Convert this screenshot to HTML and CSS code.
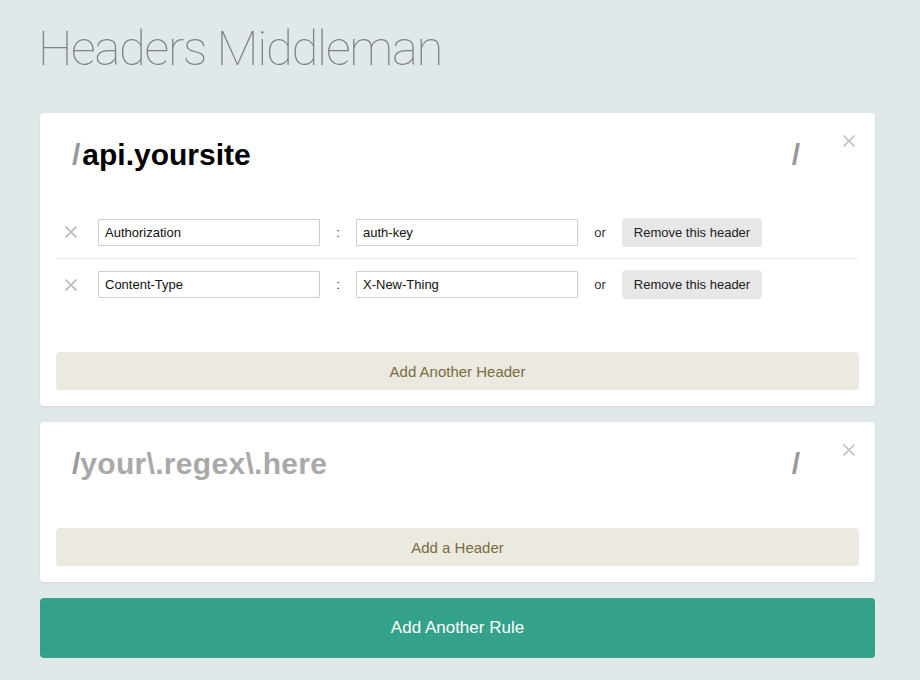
FILE: index.html
```html
<!DOCTYPE html>
<html>
<head>
<meta charset="utf-8">
<link rel="stylesheet" href="styles.css">
</head>
<body>
<main class="page">
  <h1 class="title">Headers Middleman</h1>

  <section class="card">
    <button class="card-close" aria-label="Remove rule">
      <svg width="12" height="12" viewBox="0 0 12 12"><path d="M0.5 0.5L11.5 11.5M11.5 0.5L0.5 11.5" stroke="#c4c4c4" stroke-width="1.6"/></svg>
    </button>
    <div class="rule-head">
      <span class="slash">/</span><span class="pattern">api.yoursite</span>
      <span class="slash slash-end">/</span>
    </div>
    <div class="rows">
      <div class="row">
        <span class="row-x"><svg width="12" height="12" viewBox="0 0 12 12"><path d="M0.5 0.5L11.5 11.5M11.5 0.5L0.5 11.5" stroke="#bdbdbd" stroke-width="1.8"/></svg></span>
        <input class="field" value="Authorization">
        <span class="colon">:</span>
        <input class="field" value="auth-key">
        <span class="or">or</span>
        <button class="remove">Remove this header</button>
      </div>
      <div class="row">
        <span class="row-x"><svg width="12" height="12" viewBox="0 0 12 12"><path d="M0.5 0.5L11.5 11.5M11.5 0.5L0.5 11.5" stroke="#bdbdbd" stroke-width="1.8"/></svg></span>
        <input class="field" value="Content-Type">
        <span class="colon">:</span>
        <input class="field" value="X-New-Thing">
        <span class="or">or</span>
        <button class="remove">Remove this header</button>
      </div>
    </div>
    <button class="add-header">Add Another Header</button>
  </section>

  <section class="card">
    <button class="card-close" aria-label="Remove rule">
      <svg width="12" height="12" viewBox="0 0 12 12"><path d="M0.5 0.5L11.5 11.5M11.5 0.5L0.5 11.5" stroke="#c4c4c4" stroke-width="1.6"/></svg>
    </button>
    <div class="rule-head">
      <span class="slash">/</span><span class="pattern placeholder">your\.regex\.here</span>
      <span class="slash slash-end">/</span>
    </div>
    <div class="rows empty"></div>
    <button class="add-header">Add a Header</button>
  </section>

  <button class="add-rule">Add Another Rule</button>
</main>
</body>
</html>
```

FILE: styles.css
```css
* { box-sizing: border-box; }
html, body { margin: 0; padding: 0; }
body {
  background: #e1e8ea;
  font-family: "Liberation Sans", Arial, sans-serif;
  color: #222;
}
.page {
  padding: 0 45px 0 40px;
}
.title {
  font-family: Roboto, "Liberation Sans", sans-serif;
  font-weight: 100;
  font-size: 49px;
  line-height: 60px;
  color: #7f8385;
  margin: 19px 0 34px -2px;
  letter-spacing: -1.3px;
}
.card {
  position: relative;
  background: #fff;
  border-radius: 4px;
  padding: 16px;
  margin-bottom: 16px;
  box-shadow: 0 1px 3px rgba(0, 0, 0, 0.07);
}
.card-close {
  position: absolute;
  top: 22px;
  right: 20px;
  border: 0;
  background: none;
  padding: 0;
  width: 12px;
  height: 12px;
  line-height: 0;
}
.rule-head {
  display: flex;
  align-items: center;
  height: 77px;
  padding: 0 59px 25px 16px;
  font-weight: bold;
  font-size: 30px;
}
.slash { color: #999; }
.pattern { color: #000; flex: 1; padding-left: 2px; }
.pattern.placeholder { color: #a9a9a9; padding-left: 0; letter-spacing: 0.3px; }
.slash-end { flex: none; }
.rows { padding-bottom: 42px; }
.rows.empty { padding-bottom: 13px; }
.row {
  display: flex;
  align-items: center;
  height: 52px;
}
.row + .row { border-top: 1px solid #eee; }
.row-x {
  width: 30px;
  display: flex;
  justify-content: center;
  margin-right: 12px;
}
.field {
  width: 222px;
  height: 27px;
  border: 1px solid #cfcfcf;
  border-radius: 1px;
  padding: 0 6px;
  font-family: "Liberation Sans", Arial, sans-serif;
  font-size: 13px;
  color: #111;
}
.colon {
  width: 36px;
  text-align: center;
  font-size: 13px;
  color: #333;
}
.or {
  width: 44px;
  text-align: center;
  font-size: 13px;
  color: #333;
}
.remove {
  width: 140px;
  height: 29px;
  border: 0;
  border-radius: 4px;
  background: #e7e7e7;
  font-family: "Liberation Sans", Arial, sans-serif;
  font-size: 13px;
  color: #222;
}
.add-header {
  display: block;
  width: 100%;
  height: 38px;
  border: 0;
  border-radius: 4px;
  background: #ece9e1;
  color: #7a6c3f;
  font-family: "Liberation Sans", Arial, sans-serif;
  font-size: 15px;
}
.add-rule {
  display: block;
  width: 100%;
  height: 60px;
  border: 0;
  border-radius: 4px;
  background: #34a28a;
  color: #fff;
  font-family: "Liberation Sans", Arial, sans-serif;
  font-size: 17px;
}
```
